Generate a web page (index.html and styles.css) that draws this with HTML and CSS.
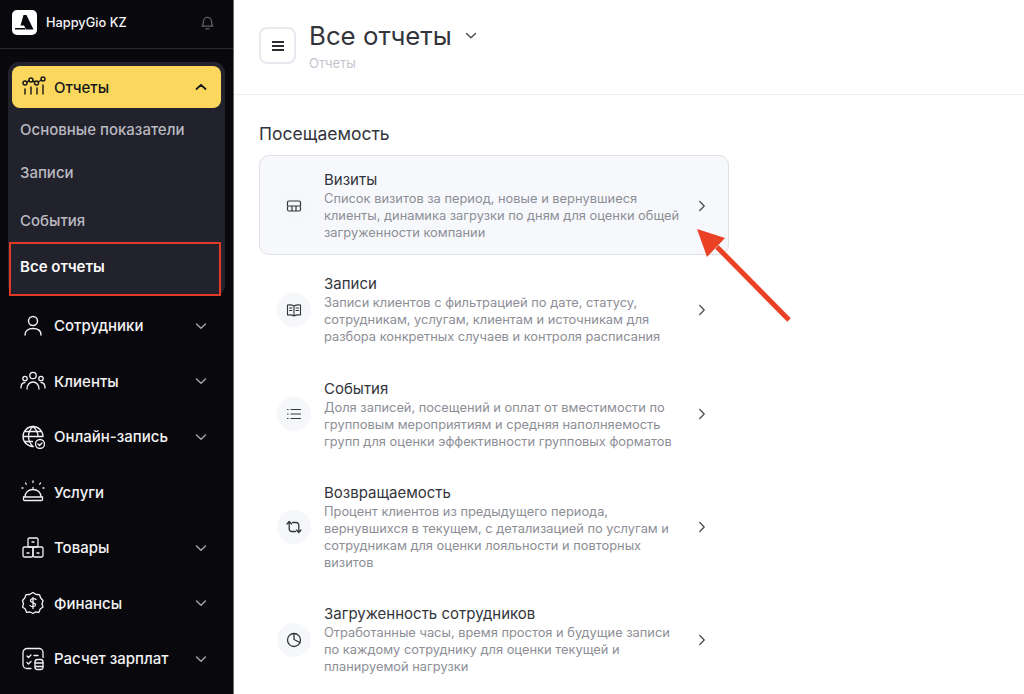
FILE: index.html
```html
<!DOCTYPE html>
<html lang="ru">
<head>
<meta charset="utf-8">
<title>Все отчеты</title>
<link rel="stylesheet" href="styles.css">
</head>
<body>
<div class="app">
  <aside class="sidebar">
    <div class="brand">
      <div class="logo"><svg width="25" height="25" viewBox="0 0 25 25"><path d="M11.500 5h3l7 14.500h-7.500L12 15.500H8.500z" fill="#0a0a0e"/><path d="M3 18h10l.6 1.500H3z" fill="#0a0a0e"/></svg></div>
      <span class="brand-name">HappyGio KZ</span>
      <svg class="bell" width="17" height="17" viewBox="0 0 16 16" fill="none" stroke="#5f5f66" stroke-width="1.200"><path d="M3 11.500c1-1 1.200-2 1.200-4.500a3.800 3.800 0 0 1 7.600 0c0 2.500.2 3.500 1.200 4.500z" stroke-linejoin="round"/><path d="M6.500 14h3" stroke-linecap="round"/></svg>
    </div>
    <div class="group">
      <div class="group-head">
        <svg class="nav-icon" width="26" height="24" viewBox="0 0 26 24" fill="none" stroke="#15151a" stroke-width="1.400" stroke-linecap="round"><circle cx="4" cy="8" r="2"/><circle cx="10" cy="5" r="2"/><circle cx="15.500" cy="8" r="2"/><circle cx="22" cy="4" r="2"/><path d="M5.800 7l2.400-1.200M11.800 6l2 1M17.300 7l3-2"/><path d="M4 14v5M10 12v7M16 13v6M22 10v9"/></svg>
        <span class="nav-label">Отчеты</span>
        <svg class="chev" width="12" height="8" viewBox="0 0 12 8" fill="none" stroke="#15151a" stroke-width="1.800" stroke-linecap="round" stroke-linejoin="round"><path d="M1.500 6L6 1.800 10.500 6"/></svg>
      </div>
      <div class="sub-list">
        <a class="sub-item">Основные показатели</a>
        <a class="sub-item">Записи</a>
        <a class="sub-item">События</a>
        <a class="sub-item sub-active">Все отчеты</a>
      </div>
      <div class="highlight"></div>
    </div>
    <nav class="nav">
      <div class="nav-item">
        <svg class="nav-icon" width="26" height="24" viewBox="0 0 26 24" fill="none" stroke="#f2f2f4" stroke-width="1.400" stroke-linecap="round"><circle cx="13" cy="7" r="4.500"/><path d="M5 21c0-4 3-6.500 8-6.500s8 2.500 8 6.500"/></svg>
        <span class="nav-label">Сотрудники</span>
        <svg class="chev" width="12" height="8" viewBox="0 0 12 8" fill="none" stroke="#a5a5ab" stroke-width="1.400" stroke-linecap="round" stroke-linejoin="round"><path d="M1.500 2L6 6.200 10.500 2"/></svg>
      </div>
      <div class="nav-item">
        <svg class="nav-icon" width="26" height="24" viewBox="0 0 26 24" fill="none" stroke="#f2f2f4" stroke-width="1.300" stroke-linecap="round"><circle cx="13" cy="6.500" r="3.200"/><circle cx="5" cy="9.500" r="2.200"/><circle cx="21" cy="9.500" r="2.200"/><path d="M7 20c0-4 2.500-7 6-7s6 3 6 7M1 19c0-3 1.500-5.500 4-5.500M25 19c0-3-1.500-5.500-4-5.500"/></svg>
        <span class="nav-label">Клиенты</span>
        <svg class="chev" width="12" height="8" viewBox="0 0 12 8" fill="none" stroke="#a5a5ab" stroke-width="1.400" stroke-linecap="round" stroke-linejoin="round"><path d="M1.500 2L6 6.200 10.500 2"/></svg>
      </div>
      <div class="nav-item">
        <svg class="nav-icon" width="26" height="24" viewBox="0 0 26 24" fill="none" stroke="#f2f2f4" stroke-width="1.300" stroke-linecap="round"><path d="M13 21.500a10 10 0 1 1 10-10M3 11.500h20M4.500 6.500h17M4.500 16.500h8"/><path d="M13 1.500c-6 5.500-6 14.500 0 20M13 1.500c3.500 3 5 7 5 10"/><circle cx="20" cy="19" r="4.500"/><path d="M18 19l1.500 1.500 2.500-2.500"/></svg>
        <span class="nav-label">Онлайн-запись</span>
        <svg class="chev" width="12" height="8" viewBox="0 0 12 8" fill="none" stroke="#a5a5ab" stroke-width="1.400" stroke-linecap="round" stroke-linejoin="round"><path d="M1.500 2L6 6.200 10.500 2"/></svg>
      </div>
      <div class="nav-item">
        <svg class="nav-icon" width="26" height="24" viewBox="0 0 26 24" fill="none" stroke="#f2f2f4" stroke-width="1.300" stroke-linecap="round"><path d="M13 1v1.500M5.500 3l.8 1.200M20.500 3l-.8 1.200M2 8h1M23 8h1M5 17c0-4.500 3.500-7.500 8-7.500s8 3 8 7.500M13 7.500v2M3.500 17h19v2.500a1 1 0 0 1-1 1h-17a1 1 0 0 1-1-1z"/></svg>
        <span class="nav-label">Услуги</span>
      </div>
      <div class="nav-item">
        <svg class="nav-icon" width="26" height="24" viewBox="0 0 26 24" fill="none" stroke="#f2f2f4" stroke-width="1.300" stroke-linecap="round"><rect x="8" y="2" width="10" height="9" rx="1.500"/><rect x="3" y="11" width="10" height="10" rx="1.500"/><rect x="13" y="11" width="10" height="10" rx="1.500"/><path d="M12 6h2M7 17h2M17 17h2"/></svg>
        <span class="nav-label">Товары</span>
        <svg class="chev" width="12" height="8" viewBox="0 0 12 8" fill="none" stroke="#a5a5ab" stroke-width="1.400" stroke-linecap="round" stroke-linejoin="round"><path d="M1.500 2L6 6.200 10.500 2"/></svg>
      </div>
      <div class="nav-item">
        <svg class="nav-icon" width="26" height="24" viewBox="0 0 26 24" fill="none" stroke="#f2f2f4" stroke-width="1.300" stroke-linecap="round" stroke-linejoin="round"><path d="M13 1.500l3 2 3.500.2 1.200 3.300 2.300 2.500-1 3.500 1 3-2.800 2-1.200 3.300-3.500-.3-2.500 1.500-3-1.500-3.500.3-1.200-3.300-2.800-2 1-3-1-3.500 2.300-2.500 1.200-3.300 3.500-.2z"/><path d="M16 8.500c-.8-1-4.800-1.500-5.500.7-.8 2.800 5.300 2 5 4.800-.3 2.200-4.500 2-5.500.5M13 6.500v11"/></svg>
        <span class="nav-label">Финансы</span>
        <svg class="chev" width="12" height="8" viewBox="0 0 12 8" fill="none" stroke="#a5a5ab" stroke-width="1.400" stroke-linecap="round" stroke-linejoin="round"><path d="M1.500 2L6 6.200 10.500 2"/></svg>
      </div>
      <div class="nav-item">
        <svg class="nav-icon" width="26" height="24" viewBox="0 0 26 24" fill="none" stroke="#f2f2f4" stroke-width="1.300" stroke-linecap="round" stroke-linejoin="round"><path d="M11 21.500H7a4 4 0 0 1-4-4v-12a4 4 0 0 1 4-4h12a4 4 0 0 1 4 4v5"/><path d="M7 9l1.500 1.500L11 8M7 15.500l1.500 1.500 2.500-2.500M14 8.500h4"/><rect x="15" y="12.500" width="8" height="10" rx="2.500"/><path d="M15 16h8M15 19.500h8"/></svg>
        <span class="nav-label">Расчет зарплат</span>
        <svg class="chev" width="12" height="8" viewBox="0 0 12 8" fill="none" stroke="#a5a5ab" stroke-width="1.400" stroke-linecap="round" stroke-linejoin="round"><path d="M1.500 2L6 6.200 10.500 2"/></svg>
      </div>
    </nav>
  </aside>
  <main class="main">
    <header class="topbar">
      <button class="menu-btn"><svg width="14" height="12" viewBox="0 0 14 12" fill="none" stroke="#2b2d33" stroke-width="1.800"><path d="M1 2h12M1 6h12M1 10h12"/></svg></button>
      <div class="titles">
        <h1 class="title">Все отчеты <svg class="title-chev" width="12" height="8" viewBox="0 0 12 8" fill="none" stroke="#4a4d55" stroke-width="1.400" stroke-linecap="round" stroke-linejoin="round"><path d="M1.500 1.500L6 5.700 10.500 1.500"/></svg></h1>
        <div class="crumb">Отчеты</div>
      </div>
    </header>
    <section class="content">
      <h2 class="section-title">Посещаемость</h2>
      <div class="rows">
        <div class="row row-active">
          <div class="row-icon"><svg width="16" height="16" viewBox="0 0 16 16" fill="none" stroke="#33353b" stroke-width="1.200"><path d="M1.500 8V4.500A1.500 1.500 0 0 1 3 3h10a1.500 1.500 0 0 1 1.500 1.500V8"/><rect x="1.500" y="8" width="13" height="5" rx="1.500"/><path d="M6 8v5M10 8v5"/></svg></div>
          <div class="row-text"><div class="row-title">Визиты</div><div class="row-desc">Список визитов за период, новые и вернувшиеся<br>клиенты, динамика загрузки по дням для оценки общей<br>загруженности компании</div></div>
          <svg class="row-chev" width="8" height="12" viewBox="0 0 8 12" fill="none" stroke="#4a4d55" stroke-width="1.300" stroke-linecap="round" stroke-linejoin="round"><path d="M1.800 1.500L6.200 6 1.800 10.500"/></svg>
        </div>
        <div class="row">
          <div class="row-icon"><svg width="16" height="16" viewBox="0 0 16 16" fill="none" stroke="#33353b" stroke-width="1.100" stroke-linecap="round" stroke-linejoin="round"><path d="M8 4c-1.500-1-4-1.300-6.500-1v10c2.500-.3 5 0 6.500 1 1.500-1 4-1.300 6.500-1V3C12 2.700 9.500 3 8 4zM8 4v10"/><path d="M3.500 6h2.500M3.500 8.500h2.500M10 6h2.500M10 8.500h2.500"/></svg></div>
          <div class="row-text"><div class="row-title">Записи</div><div class="row-desc">Записи клиентов с фильтрацией по дате, статусу,<br>сотрудникам, услугам, клиентам и источникам для<br>разбора конкретных случаев и контроля расписания</div></div>
          <svg class="row-chev" width="8" height="12" viewBox="0 0 8 12" fill="none" stroke="#4a4d55" stroke-width="1.300" stroke-linecap="round" stroke-linejoin="round"><path d="M1.800 1.500L6.200 6 1.800 10.500"/></svg>
        </div>
        <div class="row">
          <div class="row-icon"><svg width="16" height="16" viewBox="0 0 16 16" fill="none" stroke="#33353b" stroke-width="1.200" stroke-linecap="round"><path d="M5 3.500h9.500M5 8h9.500M5 12.500h9.500M1.500 3.500h.6M1.500 8h.6M1.500 12.500h.6"/></svg></div>
          <div class="row-text"><div class="row-title">События</div><div class="row-desc">Доля записей, посещений и оплат от вместимости по<br>групповым мероприятиям и средняя наполняемость<br>групп для оценки эффективности групповых форматов</div></div>
          <svg class="row-chev" width="8" height="12" viewBox="0 0 8 12" fill="none" stroke="#4a4d55" stroke-width="1.300" stroke-linecap="round" stroke-linejoin="round"><path d="M1.800 1.500L6.200 6 1.800 10.500"/></svg>
        </div>
        <div class="row">
          <div class="row-icon"><svg width="16" height="16" viewBox="0 0 16 16" fill="none" stroke="#33353b" stroke-width="1.300" stroke-linecap="round" stroke-linejoin="round"><path d="M1 5l2.200-2.500L5.500 5M3.200 3v7a2.500 2.500 0 0 0 2.500 2.500H9.500M15 11l-2.200 2.500-2.300-2.500M12.800 13V6a2.500 2.500 0 0 0-2.500-2.500H6.500"/></svg></div>
          <div class="row-text"><div class="row-title">Возвращаемость</div><div class="row-desc">Процент клиентов из предыдущего периода,<br>вернувшихся в текущем, с детализацией по услугам и<br>сотрудникам для оценки лояльности и повторных<br>визитов</div></div>
          <svg class="row-chev" width="8" height="12" viewBox="0 0 8 12" fill="none" stroke="#4a4d55" stroke-width="1.300" stroke-linecap="round" stroke-linejoin="round"><path d="M1.800 1.500L6.200 6 1.800 10.500"/></svg>
        </div>
        <div class="row">
          <div class="row-icon"><svg width="16" height="16" viewBox="0 0 16 16" fill="none" stroke="#33353b" stroke-width="1.300" stroke-linecap="round" stroke-linejoin="round"><circle cx="8" cy="8" r="6.500"/><path d="M8 1.500V7.500L13.800 10.500"/></svg></div>
          <div class="row-text"><div class="row-title">Загруженность сотрудников</div><div class="row-desc">Отработанные часы, время простоя и будущие записи<br>по каждому сотруднику для оценки текущей и<br>планируемой нагрузки</div></div>
          <svg class="row-chev" width="8" height="12" viewBox="0 0 8 12" fill="none" stroke="#4a4d55" stroke-width="1.300" stroke-linecap="round" stroke-linejoin="round"><path d="M1.800 1.500L6.200 6 1.800 10.500"/></svg>
        </div>
      </div>
      <svg class="arrow" width="110" height="100" viewBox="0 0 110 100"><path d="M97 95L25 22" stroke="#ea4125" stroke-width="5"/><path d="M5 4L33 13 15 32z" fill="#ea4125"/></svg>
    </section>
  </main>
</div>
</body>
</html>
```
FILE: styles.css
```css
* { box-sizing: border-box; }
html, body { margin: 0; height: 100%; overflow: hidden; }
body { font-family: Inter, "Noto Sans", sans-serif; background: #fff; }
.app { display: flex; height: 694px; }

.sidebar { width: 234px; flex: none; background: #09090d; border-right: 1px solid #6b6b6f; display: flex; flex-direction: column; }
.brand { height: 49px; flex: none; display: flex; align-items: center; padding: 0 17px 3px 12px; border-bottom: 1px solid #2a2a30; }
.logo { width: 25px; height: 25px; background: #fff; border-radius: 5px; display: flex; align-items: center; justify-content: center; }
.brand-name { margin-left: 9px; color: #f4f4f6; font-size: 12.800px; font-weight: 500; }
.bell { margin-left: auto; }

.group { position: relative; margin: 13px 8px 0; width: 217px; height: 234px; background: #22222c; border-radius: 11px; padding: 4px; }
.group-head { height: 42px; background: #fbd85d; border-radius: 8px; display: flex; align-items: center; padding: 0 9px; color: #15151a; }
.group-head .nav-label { margin-left: 7px; color: #15151a; }
.group-head .chev { margin-left: auto; margin-right: 5px; }
.sub-list { display: grid; grid-template-rows: 43px 43px 52px 40px; padding-left: 8px; }
.sub-item { display: flex; align-items: center; color: #b9b9c0; font-size: 15px; font-weight: 500; }
.sub-active { color: #fafafa; font-weight: 600; }
.highlight { position: absolute; left: 1px; top: 180px; width: 212px; height: 54px; border: 2px solid #e23a26; }

.nav { display: flex; flex-direction: column; margin-top: 2px; }
.nav-item { height: 55.500px; display: flex; align-items: center; padding: 0 26px 0 20px; }
.nav-icon { flex: none; }
.nav-label { margin-left: 8px; color: #f2f2f4; font-size: 15px; font-weight: 500; }
.nav-item .chev { margin-left: auto; }

.main { flex: 1; min-width: 0; }
.topbar { height: 95px; border-bottom: 1px solid #ececf0; display: flex; align-items: flex-start; padding: 27px 0 0 25px; }
.menu-btn { width: 37px; height: 37px; padding: 0; background: #fff; border: 2px solid #e8e9ef; border-radius: 8px; display: flex; align-items: center; justify-content: center; }
.titles { margin: -9px 0 0 13px; }
.title { margin: 0; font-size: 25.800px; line-height: 36px; font-weight: 400; color: #33353b; display: flex; align-items: center; }
.title-chev { margin: 0 0 0 13px; }
.crumb { margin-top: 0; font-size: 13px; line-height: 18px; color: #c4c6cd; }

.content { position: relative; padding: 28px 0 0 25px; }
.section-title { margin: 0 0 10px; font-size: 17.500px; line-height: 22px; font-weight: 400; color: #33353b; }
.rows { width: 470px; display: flex; flex-direction: column; gap: 4.300px; }
.row { display: flex; align-items: center; padding: 14px 22px 13px 17px; border: 1px solid transparent; border-radius: 10px; }
.row-active { background: #f7f8fc; border-color: #dfe0e6; }
.row-icon { width: 34px; height: 34px; flex: none; background: #f6f7fb; border-radius: 50%; display: flex; align-items: center; justify-content: center; }
.row-text { margin-left: 13px; flex: 1; }
.row-title { font-size: 15px; line-height: 20px; color: #33353b; }
.row-desc { font-size: 12.850px; line-height: 17px; color: #8c8e96; }
.row-chev { flex: none; }
.arrow { position: absolute; left: 458px; top: 130px; }
```
